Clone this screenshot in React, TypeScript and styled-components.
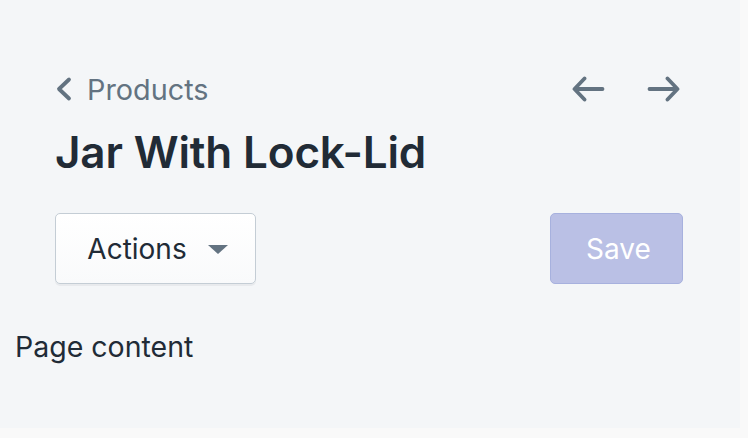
import React from "react"
import styled, { createGlobalStyle } from "styled-components"

const GlobalStyle = createGlobalStyle`
  html, body {
    margin: 0;
    padding: 0;
    background: #f9f9f9;
    font-family: Inter, "Liberation Sans", sans-serif;
    -webkit-font-smoothing: antialiased;
  }
`

const Frame = styled.div`
  width: 740px;
  height: 428px;
  background: #f4f6f8;
  display: flex;
  flex-direction: column;
`

const Header = styled.header`
  padding: 72px 57px 0 55px;
  display: flex;
  flex-direction: column;
`

const TopRow = styled.div`
  display: flex;
  align-items: center;
  justify-content: space-between;
  height: 34px;
`

const Breadcrumb = styled.a`
  display: flex;
  align-items: center;
  gap: 15px;
  color: #637381;
  font-size: 28.8px;
  text-decoration: none;
  cursor: pointer;
`

const Pagination = styled.div`
  display: flex;
  align-items: center;
  gap: 42px;
  padding-right: 2px;
`

const IconButton = styled.button`
  border: 0;
  background: none;
  padding: 0;
  display: flex;
  color: #637381;
  cursor: pointer;
`

const Title = styled.h1`
  margin: 22px 0 0;
  font-size: 44px;
  line-height: 48px;
  font-weight: 600;
  color: #212b36;
  letter-spacing: -0.15px;
`

const ActionsRow = styled.div`
  margin-top: 37px;
  display: flex;
  justify-content: space-between;
  align-items: center;
`

const Button = styled.button<{ $primary?: boolean; $width: number }>`
  width: ${p => p.$width}px;
  height: 71px;
  box-sizing: border-box;
  border-radius: 5px;
  font-family: inherit;
  font-size: 28px;
  display: flex;
  align-items: center;
  justify-content: center;
  gap: 21px;
  padding: 0 0 0 4px;
  border: 1.5px solid ${p => (p.$primary ? "#a7b1de" : "#c4cdd5")};
  background: ${p => (p.$primary ? "#bac0e5" : "linear-gradient(180deg, #ffffff, #f9fafb)")};
  color: ${p => (p.$primary ? "#ffffff" : "#212b36")};
  box-shadow: ${p => (p.$primary ? "none" : "0 2px 0 rgba(22, 29, 37, 0.05)")};
  cursor: pointer;
`

const Caret = styled.span`
  width: 0;
  height: 0;
  border-left: 10.5px solid transparent;
  border-right: 10.5px solid transparent;
  border-top: 9.5px solid #637381;
  margin-top: 2px;
`

const Content = styled.main`
  margin-top: 43px;
  padding-left: 15px;
  font-size: 28.5px;
  line-height: 40px;
  color: #212b36;
`

const ChevronLeft = () => (
  <svg width="17" height="26" viewBox="0 0 17 26" fill="none">
    <path d="M14 3.5 L4 13 L14 22.5" stroke="currentColor" strokeWidth="3.8" strokeLinecap="round" strokeLinejoin="round" />
  </svg>
)

const Arrow = ({ dir }: { dir: "left" | "right" }) => (
  <svg width="34" height="26" viewBox="0 0 34 26" fill="none" style={{ transform: dir === "right" ? "scaleX(-1)" : undefined }}>
    <path d="M31.5 13 H4 M13.5 2.5 L3.5 13 L13.5 23.5" stroke="currentColor" strokeWidth="3.8" strokeLinecap="round" strokeLinejoin="round" />
  </svg>
)

export default function App() {
  return (
    <>
      <GlobalStyle />
      <Frame>
        <Header>
          <TopRow>
            <Breadcrumb>
              <ChevronLeft />
              Products
            </Breadcrumb>
            <Pagination>
              <IconButton aria-label="Previous">
                <Arrow dir="left" />
              </IconButton>
              <IconButton aria-label="Next">
                <Arrow dir="right" />
              </IconButton>
            </Pagination>
          </TopRow>
          <Title>Jar With Lock-Lid</Title>
          <ActionsRow>
            <Button $width={201}>
              Actions
              <Caret />
            </Button>
            <Button $primary $width={133} disabled>
              Save
            </Button>
          </ActionsRow>
        </Header>
        <Content>Page content</Content>
      </Frame>
    </>
  )
}
